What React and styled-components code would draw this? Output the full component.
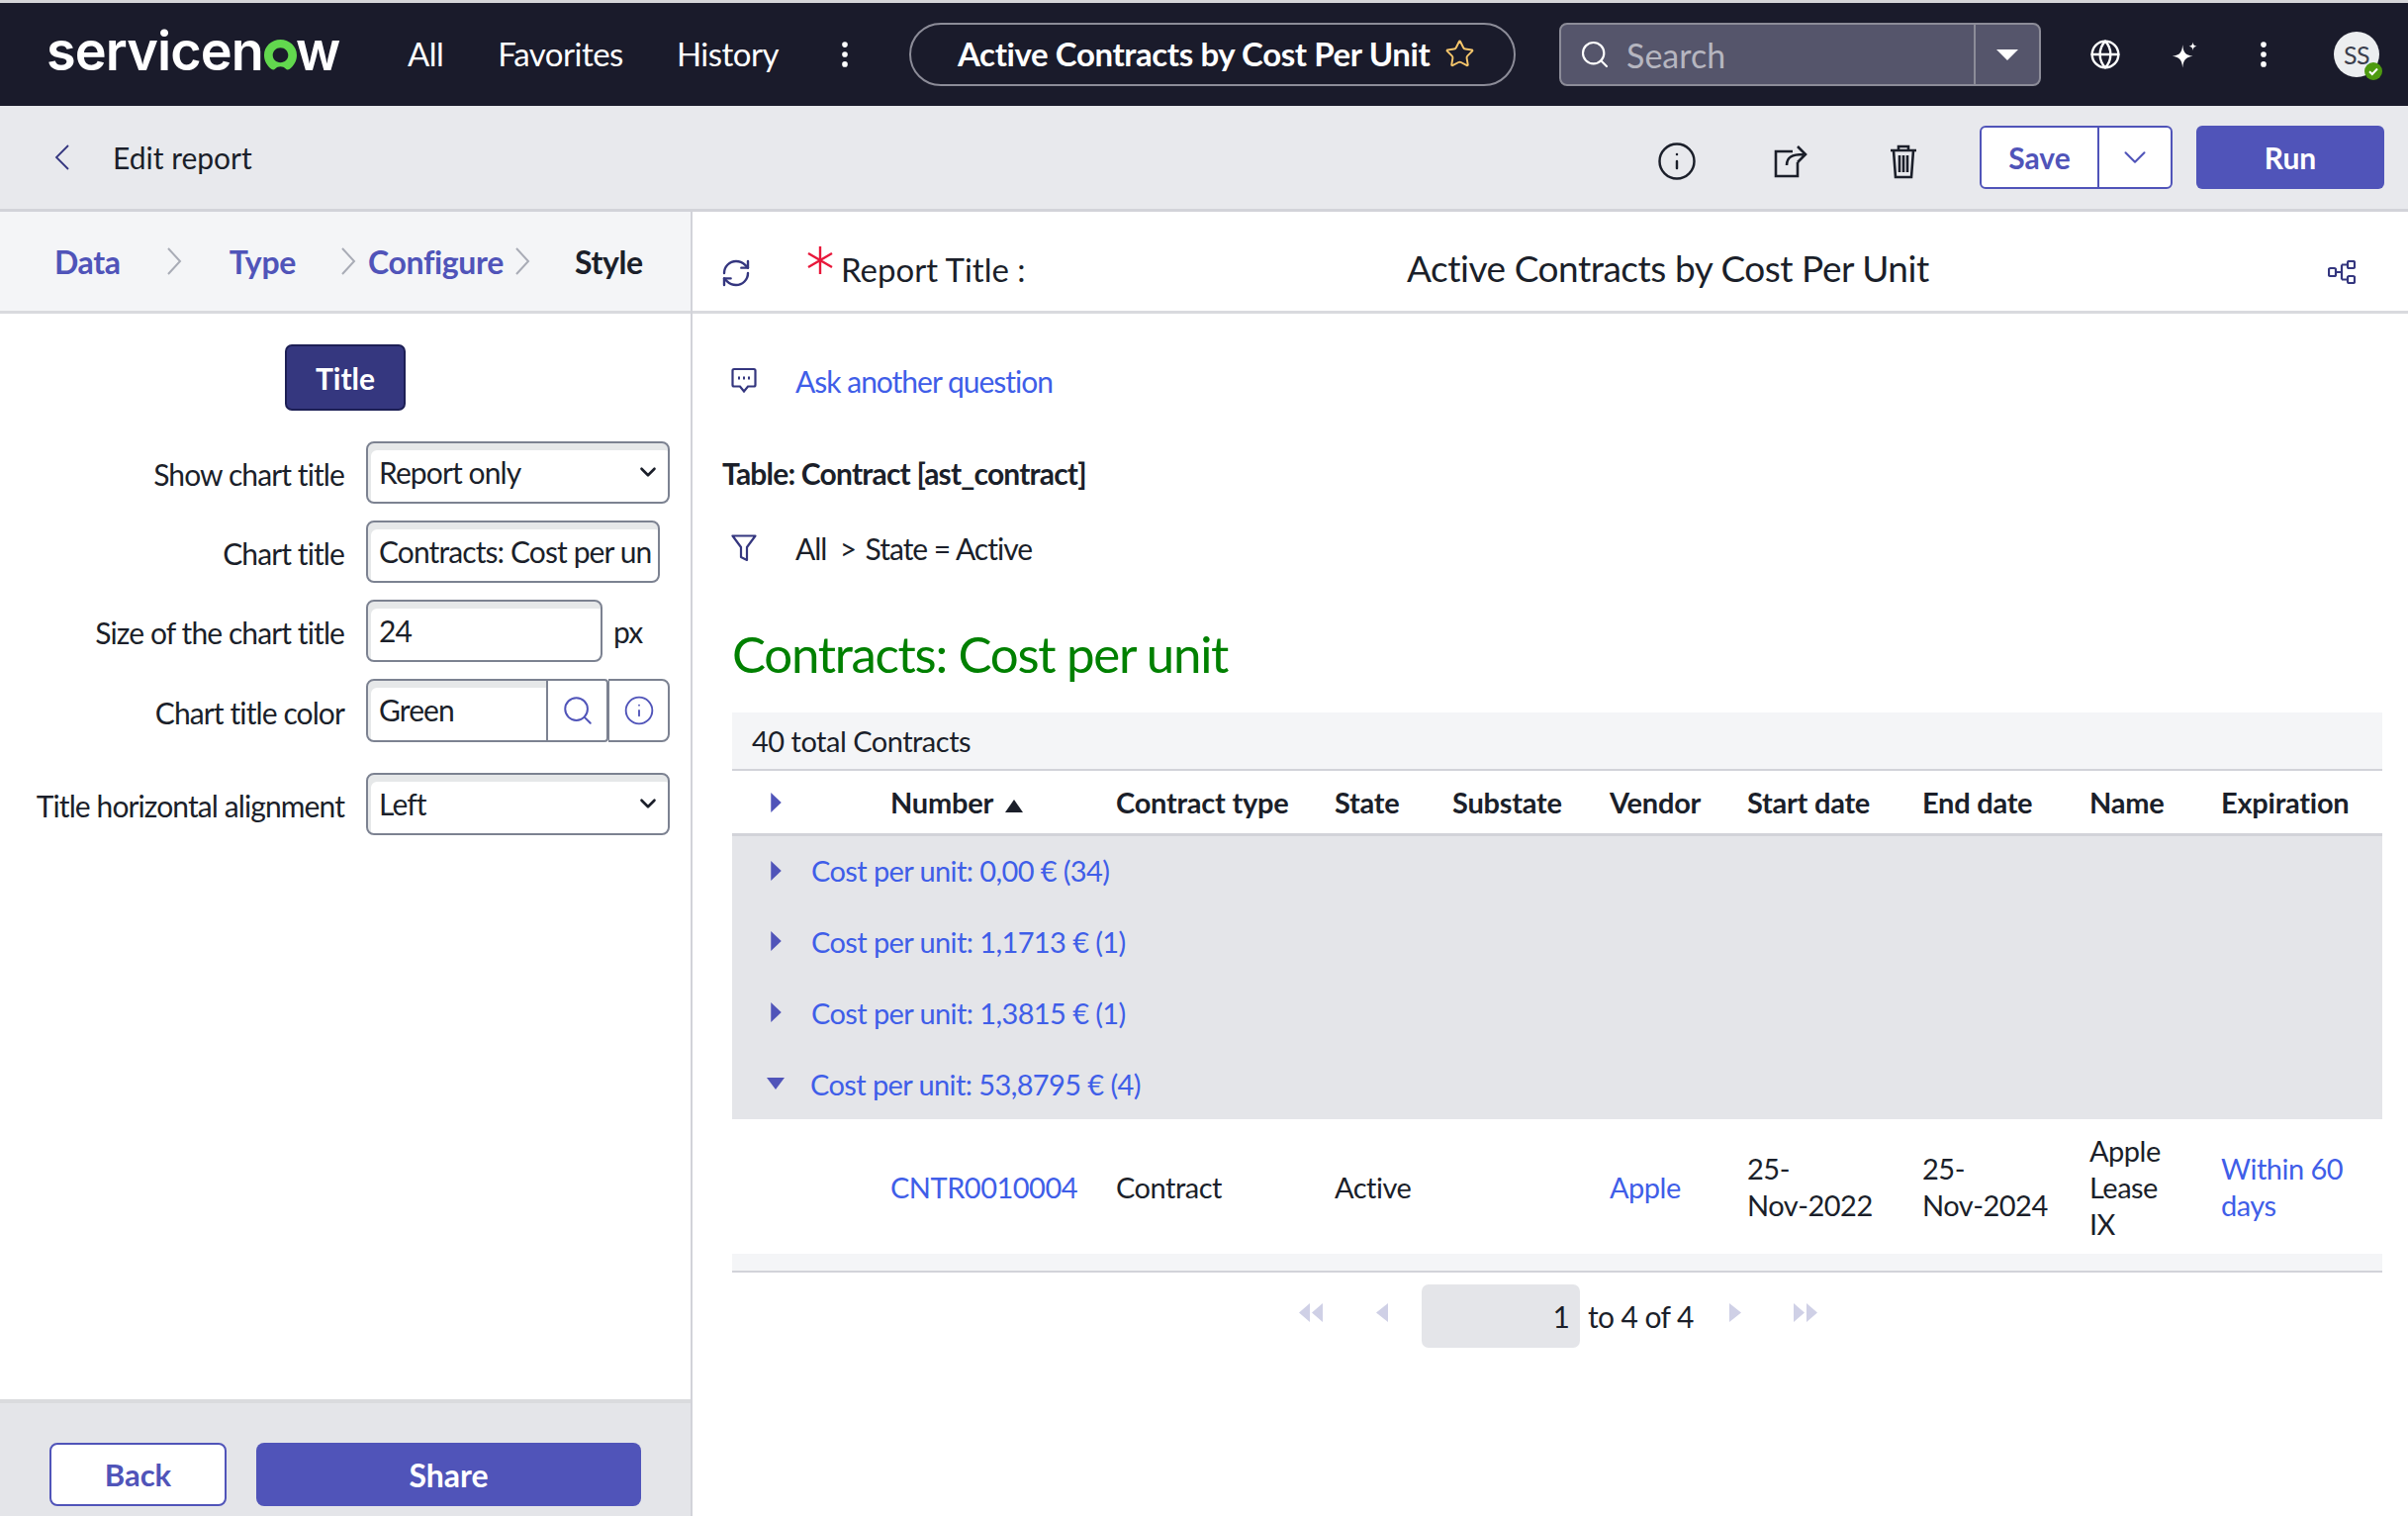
import React from "react"
import styled, { createGlobalStyle } from "styled-components"
import { Search, Star, Globe, MoreVertical, ChevronDown, Info, RefreshCw } from "lucide-react"

const GlobalStyle = createGlobalStyle`
  html, body { margin: 0; padding: 0; background: #fff; }
  body { font-family: Lato, "Open Sans", sans-serif; color: #1b1f2a; font-size: 30px; }
  * { box-sizing: border-box; }
`

const Page = styled.div`
  width: 2434px;
  height: 1532px;
  overflow: hidden;
  display: flex;
  flex-direction: column;
  border-top: 3px solid #d5d5d8;
`

/* top nav */
const Nav = styled.header`
  height: 104px;
  flex: none;
  background: #1a1b2b;
  color: #fff;
  display: flex;
  align-items: center;
  padding-left: 47px;
`
const Logo = styled.div`
  width: 296px;
  margin-right: 69px;
  font-family: Inter, sans-serif;
  font-weight: 600;
  font-size: 54px;
  line-height: 1;
  letter-spacing: -0.9px;
  display: flex;
  align-items: baseline;
  position: relative;
  top: -3px;
`
const LogoO = styled.svg`
  width: 33px;
  height: 31px;
  margin: 0 -1px 0 1px;
  flex: none;
  align-self: baseline;
`
const NavLink = styled.a`
  font-size: 33px;
  letter-spacing: -0.5px;
  margin: -2px ${(p) => p.$gap}px 0 0;
  color: #fff;
`
const NavKebab = styled(MoreVertical)`
  flex: none;
  color: #fff;
`
const TitlePill = styled.div`
  width: 613px;
  height: 64px;
  margin-left: 48px;
  border: 2.5px solid #8c8c98;
  border-radius: 32px;
  display: flex;
  align-items: center;
  padding: 0 0 2px 47px;
  font-size: 33px;
  font-weight: 700;
  letter-spacing: -0.4px;
  white-space: nowrap;
  svg { margin-left: 15px; color: #f6c66b; flex: none; }
`
const SearchBox = styled.div`
  width: 487px;
  height: 64px;
  margin-left: 44px;
  border: 2.5px solid #8c8c98;
  border-radius: 8px;
  background: #55556b;
  display: flex;
  align-items: center;
`
const SearchField = styled.div`
  flex: 1;
  height: 100%;
  display: flex;
  align-items: center;
  gap: 16px;
  padding-left: 18px;
  color: #b6b6c0;
  font-size: 34px;
  svg { color: #fff; }
`
const SearchCaret = styled.div`
  width: 66px;
  height: 100%;
  border-left: 2px solid #8c8c98;
  display: flex;
  align-items: center;
  justify-content: center;
  &::after {
    content: "";
    border-left: 11px solid transparent;
    border-right: 11px solid transparent;
    border-top: 11px solid #fff;
  }
`
const NavIcons = styled.div`
  display: flex;
  align-items: center;
  margin-left: 49px;
  gap: 48px;
  svg { flex: none; color: #fff; }
`
const Avatar = styled.div`
  width: 46px;
  height: 46px;
  margin-left: 6px;
  border-radius: 50%;
  background: #eceef0;
  color: #3b3f4d;
  font-size: 25px;
  letter-spacing: -0.5px;
  display: flex;
  align-items: center;
  justify-content: center;
  position: relative;
`
const AvatarBadge = styled.svg`
  position: absolute;
  right: -3px;
  bottom: -3px;
`

/* edit toolbar */
const Toolbar = styled.div`
  height: 107px;
  flex: none;
  background: #e8e9ed;
  border-bottom: 3px solid #d2d3d9;
  display: flex;
  align-items: center;
  padding: 0 24px 1px 55px;
`
const ThinChevron = styled.svg`
  flex: none;
  margin-right: ${(p) => p.$gap}px;
`
const ToolbarTitle = styled.div`
  font-size: 30px;
  flex: 1;
`
const ToolIcons = styled.div`
  display: flex;
  align-items: center;
  gap: 76px;
  margin: 9px 62px 0 0;
  svg { flex: none; }
  svg:last-child { margin-left: 5px; }
`
const SaveGroup = styled.div`
  width: 195px;
  height: 64px;
  border: 2.5px solid #5054b9;
  border-radius: 6px;
  background: #fff;
  display: flex;
  align-items: stretch;
  color: #5054b9;
  font-weight: 700;
`
const SaveLabel = styled.div`
  width: 119px;
  display: flex;
  align-items: center;
  justify-content: center;
  border-right: 2px solid #5054b9;
`
const SaveArrow = styled.div`
  flex: 1;
  display: flex;
  align-items: center;
  justify-content: center;
`
const PrimaryButton = styled.button`
  width: ${(p) => p.$width}px;
  height: 64px;
  border: none;
  border-radius: 6px;
  background: #5054b9;
  color: #fff;
  font: 700 30px Lato, sans-serif;
  margin-left: ${(p) => p.$left || 0}px;
`

/* body */
const Body = styled.div`
  flex: 1;
  display: flex;
  min-height: 0;
`
const LeftPanel = styled.aside`
  width: 700px;
  flex: none;
  border-right: 2px solid #d2d3d9;
  display: flex;
  flex-direction: column;
`
const Steps = styled.nav`
  height: 103px;
  flex: none;
  background: #f4f5f7;
  border-bottom: 3px solid #d9dade;
  display: flex;
  align-items: center;
  padding: 0 0 0 55px;
  font-weight: 700;
  font-size: 32px;
  letter-spacing: -0.35px;
`
const Step = styled.span`
  color: ${(p) => (p.$current ? "#1b1f2a" : "#5054b9")};
  margin-right: ${(p) => p.$gap}px;
`
const FormArea = styled.div`
  flex: 1;
  display: flex;
  flex-direction: column;
  align-items: stretch;
  padding-top: 31px;
`
const TitleTab = styled.button`
  align-self: center;
  width: 122px;
  height: 67px;
  border: 2px solid #1d1f55;
  border-radius: 7px;
  background: #35377f;
  color: #fff;
  font: 700 30px Lato, sans-serif;
`
const FormGrid = styled.div`
  margin-top: 31px;
  display: grid;
  grid-template-columns: 348px 307px;
  column-gap: 22px;
  row-gap: 17px;
  letter-spacing: -0.9px;
`
const FieldLabel = styled.label`
  justify-self: end;
  align-self: center;
  font-size: 30px;
  white-space: nowrap;
  margin-top: ${(p) => p.$top || 3}px;
`
const Control = styled.div`
  height: 63px;
  width: ${(p) => p.$width || 307}px;
  border: 2.5px solid #7c8291;
  border-radius: 8px;
  background: #fff;
  box-shadow: inset 3px 7px 0 #e6e8e9;
  display: flex;
  align-items: center;
  padding: 0 0 2px 11px;
  font-size: 30px;
  position: relative;
  overflow: hidden;
  white-space: nowrap;
  margin-top: ${(p) => p.$top || 0}px;
`
const SelectArrow = styled(ChevronDown)`
  position: absolute;
  right: 7px;
  top: 16px;
  color: #1b1f2a;
`
const FieldWithUnit = styled.div`
  display: flex;
  align-items: center;
  gap: 11px;
`
const ColorField = styled.div`
  display: flex;
  height: 64px;
  width: 307px;
`
const ColorInput = styled(Control)`
  width: 183px;
  height: 100%;
  border-radius: 8px 0 0 8px;
  border-right-width: 1px;
`
const ColorAddon = styled.div`
  width: 62px;
  height: 100%;
  border: 2.5px solid #7c8291;
  border-left-width: 1px;
  border-radius: ${(p) => (p.$last ? "0 8px 8px 0" : "0 4px 4px 0")};
  display: flex;
  align-items: center;
  justify-content: center;
  color: #5054b9;
`
const PanelFooter = styled.div`
  height: 118px;
  flex: none;
  background: #e4e5e9;
  border-top: 4px solid #dadbde;
  display: flex;
  padding: 40px 0 0 50px;
  gap: 30px;
`
const BackButton = styled.button`
  width: 179px;
  height: 64px;
  background: #fff;
  border: 2.5px solid #5054b9;
  border-radius: 8px;
  color: #5054b9;
  font: 700 31px Lato, sans-serif;
`
const ShareButton = styled(PrimaryButton)`
  border-radius: 8px;
  font-size: 32px;
`

/* right side */
const RightPanel = styled.main`
  flex: 1;
  min-width: 0;
  display: flex;
  flex-direction: column;
`
const ReportHeader = styled.div`
  height: 103px;
  flex: none;
  border-bottom: 3px solid #d9dade;
  display: flex;
  align-items: center;
  padding: 12px 0 0 28px;
`
const RefreshIcon = styled(RefreshCw)`
  color: #34367f;
  flex: none;
  margin: 12px 55px 0 0;
`
const Asterisk = styled.svg`
  flex: none;
  margin: -14px 7px 0 0;
`
const ReportLabel = styled.div`
  width: 572px;
  font-size: 33px;
  margin-top: 4px;
`
const ReportName = styled.div`
  flex: 1;
  font-size: 37px;
  letter-spacing: -0.47px;
`
const GraphIcon = styled.svg`
  flex: none;
  margin: 10px 53px 0 0;
`
const Content = styled.div`
  flex: 1;
  padding: 38px 26px 0 30px;
  display: flex;
  flex-direction: column;
`
const InfoRow = styled.div`
  height: 60px;
  display: flex;
  align-items: center;
  padding-left: 9px;
  margin-bottom: ${(p) => p.$after}px;
  font-size: 30px;
  letter-spacing: -1px;
  svg { flex: none; margin-right: 39px; }
`
const LinkText = styled.a`
  color: #3f5ee8;
`
const TableName = styled.div`
  height: 60px;
  display: flex;
  align-items: center;
  margin-bottom: 16px;
  font-weight: 700;
  font-size: 30px;
  letter-spacing: -0.8px;
`
const Heading = styled.h1`
  margin: 0 0 29px 10px;
  height: 60px;
  line-height: 60px;
  font-size: 51px;
  letter-spacing: -1.3px;
  font-weight: 400;
  color: #008000;
`
const TableWrap = styled.div`
  margin-left: 10px;
  letter-spacing: -0.5px;
`
const TotalRow = styled.div`
  height: 59px;
  background: #f4f5f7;
  border-bottom: 2.5px solid #d2d3d9;
  display: flex;
  align-items: center;
  padding-left: 20px;
  font-size: 29px;
`
const Grid = styled.table`
  width: 100%;
  table-layout: fixed;
  border-collapse: collapse;
`
const HeadCell = styled.th`
  height: 64px;
  padding: 0 0 0 15px;
  text-align: left;
  font-size: 29px;
  font-weight: 700;
  letter-spacing: -0.25px;
  white-space: nowrap;
  border-bottom: 3px solid #d2d3d9;
  svg { vertical-align: 1px; }
`
const ExpandCell = styled(HeadCell)`
  padding-left: 38px;
`
const GroupCell = styled.td`
  height: 72px;
  padding: 0 0 0 38px;
  background: #e4e5e9;
  font-size: 29px;
  letter-spacing: -0.6px;
`
const GroupInner = styled.div`
  display: flex;
  align-items: center;
  gap: 29px;
`
const Caret = styled.svg`
  flex: none;
`
const DownCaret = styled(Caret)`
  margin: 0 -3px 0 -3px;
`
const SortArrow = styled.svg`
  margin-left: 6px;
`
const BodyCell = styled.td`
  height: 136px;
  padding: 0 0 0 15px;
  font-size: 29px;
  line-height: 37px;
  vertical-align: middle;
`
const TableFoot = styled.div`
  height: 19px;
  background: #f4f5f7;
  border-bottom: 2.5px solid #d2d3d9;
`
const Pager = styled.div`
  display: flex;
  align-items: center;
  margin-top: 12px;
  padding-left: 583px;
  height: 64px;
  font-size: 29px;
`
const PagerIcon = styled.svg`
  flex: none;
  margin-right: ${(p) => p.$gap}px;
  margin-top: -8px;
`
const PageInput = styled.div`
  width: 160px;
  height: 64px;
  background: #e4e5e9;
  border-radius: 7px;
  display: flex;
  align-items: center;
  justify-content: flex-end;
  padding: 0 10px 0 0;
  font-size: 30px;
`
const PageText = styled.div`
  margin: 0 36px 0 8px;
  white-space: nowrap;
  font-size: 30px;
  letter-spacing: -0.6px;
`

const RightCaret = () => (
  <Caret width="13" height="20" viewBox="0 0 12 19">
    <path d="M1 0 L11 9.5 L1 19 Z" fill="#5054b9" />
  </Caret>
)

// tall thin chevrons used by the toolbar and the step bar
const BackChevron = () => (
  <ThinChevron $gap={44} width="15" height="26" viewBox="0 0 15 26" fill="none" stroke="#34367f" strokeWidth="1.800">
    <path d="M14 1L2 13l12 12" />
  </ThinChevron>
)
const StepChevron = ({ gap }) => (
  <ThinChevron $gap={gap} width="15" height="28" viewBox="0 0 15 28" fill="none" stroke="#a9acb6" strokeWidth="2">
    <path d="M1 1l12 13L1 27" />
  </ThinChevron>
)

const groups = ["Cost per unit: 0,00 € (34)", "Cost per unit: 1,1713 € (1)", "Cost per unit: 1,3815 € (1)"]
const columns = [
  ["Contract type", 221], ["State", 119], ["Substate", 159], ["Vendor", 139],
  ["Start date", 177], ["End date", 169], ["Name", 133], ["Expiration", 178],
]

export default function App() {
  return (
    <>
      <GlobalStyle />
      <Page>
        <Nav>
          <Logo>
            servicen
            <LogoO viewBox="0 0 33 31">
              <path fillRule="evenodd" fill="#62d84e" d="M16.5 0C7.4 0 0 7 0 15.8c0 5.8 3 11 7.6 14.2 1.2.8 2.6.6 3.6-.4 1.5-1.6 3.3-2.4 5.3-2.4s3.8.8 5.3 2.4c1 1 2.4 1.2 3.6.4C30 26.800 33 21.600 33 15.800 33 7 25.600 0 16.500 0zm0 8.200c4.400 0 7.800 3.400 7.800 7.600s-3.400 7.400-7.800 7.400-7.800-3.200-7.800-7.400 3.400-7.600 7.800-7.600z" />
            </LogoO>
            w
          </Logo>
          <NavLink $gap={55}>All</NavLink>
          <NavLink $gap={54}>Favorites</NavLink>
          <NavLink $gap={50}>History</NavLink>
          <NavKebab size={34} />
          <TitlePill>
            Active Contracts by Cost Per Unit
            <Star size={31} strokeWidth={1.5} />
          </TitlePill>
          <SearchBox>
            <SearchField>
              <Search size={32} strokeWidth={1.6} />
              Search
            </SearchField>
            <SearchCaret />
          </SearchBox>
          <NavIcons>
            <Globe size={32} strokeWidth={1.8} />
            <svg width="31" height="31" viewBox="0 0 24 24" fill="#fff">
              <path d="M11 4 C11.600 10 13 12 19 13 C13 14 11.600 16 11 22 C10.400 16 9 14 3 13 C9 12 10.400 10 11 4Z" />
              <path d="M19 2 C19.200 4 20 5 22 5.300 C20 5.600 19.200 6.500 19 8.500 C18.800 6.500 18 5.600 16 5.300 C18 5 18.800 4 19 2Z" />
            </svg>
            <MoreVertical size={34} />
            <Avatar>
              SS
              <AvatarBadge width="18" height="18" viewBox="0 0 18 18">
                <circle cx="9" cy="9" r="9" fill="#4d9a10" />
                <path d="M5 9.200l2.800 2.800L13 6.500" fill="none" stroke="#fff" strokeWidth="2" />
              </AvatarBadge>
            </Avatar>
          </NavIcons>
        </Nav>

        <Toolbar>
          <BackChevron />
          <ToolbarTitle>Edit report</ToolbarTitle>
          <ToolIcons>
            <Info size={42} strokeWidth={1.4} />
            <svg width="36" height="36" viewBox="0 0 36 36" fill="none" stroke="#1b1f2a" strokeWidth="2.6">
              <path d="M20 8H3v25h22V19" />
              <path d="M14 22c0-8 5-11 17-11M25 3l8 8-8 8" />
            </svg>
            <svg width="30" height="36" viewBox="0 0 30 36" fill="none" stroke="#1b1f2a" strokeWidth="2.6">
              <path d="M2 7h26M10 7V3h10v4M5 7l2 27h16l2-27M11 12v17M15 12v17M19 12v17" />
            </svg>
          </ToolIcons>
          <SaveGroup>
            <SaveLabel>Save</SaveLabel>
            <SaveArrow>
              <ChevronDown size={38} strokeWidth={1.3} />
            </SaveArrow>
          </SaveGroup>
          <PrimaryButton $width={190} $left={24}>Run</PrimaryButton>
        </Toolbar>

        <Body>
          <LeftPanel>
            <Steps>
              <Step $gap={47}>Data</Step>
              <StepChevron gap={48} />
              <Step $gap={46}>Type</Step>
              <StepChevron gap={12} />
              <Step $gap={12}>Configure</Step>
              <StepChevron gap={45} />
              <Step $current>Style</Step>
            </Steps>
            <FormArea>
              <TitleTab>Title</TitleTab>
              <FormGrid>
                <FieldLabel>Show chart title</FieldLabel>
                <Control>
                  Report only
                  <SelectArrow size={26} strokeWidth={2.4} />
                </Control>
                <FieldLabel>Chart title</FieldLabel>
                <Control $width={297}>Contracts: Cost per un</Control>
                <FieldLabel>Size of the chart title</FieldLabel>
                <FieldWithUnit>
                  <Control $width={239}>24</Control>
                  px
                </FieldWithUnit>
                <FieldLabel>Chart title color</FieldLabel>
                <ColorField>
                  <ColorInput>Green</ColorInput>
                  <ColorAddon>
                    <Search size={34} strokeWidth={1.4} />
                  </ColorAddon>
                  <ColorAddon $last>
                    <Info size={32} strokeWidth={1.4} />
                  </ColorAddon>
                </ColorField>
                <FieldLabel $top={17}>Title horizontal alignment</FieldLabel>
                <Control $top={14}>
                  Left
                  <SelectArrow size={26} strokeWidth={2.4} />
                </Control>
              </FormGrid>
            </FormArea>
            <PanelFooter>
              <BackButton>Back</BackButton>
              <ShareButton $width={389}>Share</ShareButton>
            </PanelFooter>
          </LeftPanel>

          <RightPanel>
            <ReportHeader>
              <RefreshIcon size={32} strokeWidth={1.8} />
              <Asterisk width="28" height="30" viewBox="0 0 28 30" fill="none" stroke="#e8173a" strokeWidth="2.4">
                <path d="M14 1v28M2 8l24 14M26 8L2 22" />
              </Asterisk>
              <ReportLabel>Report Title :</ReportLabel>
              <ReportName>Active Contracts by Cost Per Unit</ReportName>
              <GraphIcon width="28" height="24" viewBox="0 0 28 24" fill="none" stroke="#34367f" strokeWidth="2.2">
                <rect x="1" y="8" width="7" height="8" rx="1.500" />
                <rect x="20" y="1" width="7" height="7" rx="1.500" />
                <rect x="20" y="16" width="7" height="7" rx="1.500" />
                <path d="M8 12h6M14 4.500h6M14 19.500h6M14 4.500v15" />
              </GraphIcon>
            </ReportHeader>
            <Content>
              <InfoRow $after={33}>
                <svg width="26" height="28" viewBox="0 0 26 28" fill="none" stroke="#34367f" strokeWidth="2.2">
                  <path d="M3 2h20a1.500 1.500 0 0 1 1.500 1.500V18a1.500 1.500 0 0 1-1.500 1.500h-6l-4 5-4-5H3A1.500 1.500 0 0 1 1.500 18V3.500A1.500 1.500 0 0 1 3 2z" />
                  <path d="M7 11h2M12 11h2M17 11h2" strokeWidth="3" />
                </svg>
                <LinkText>Ask another question</LinkText>
              </InfoRow>
              <TableName>Table: Contract [ast_contract]</TableName>
              <InfoRow $after={47}>
                <svg width="26" height="28" viewBox="0 0 26 28" fill="none" stroke="#34367f" strokeWidth="2.2" strokeLinejoin="round">
                  <path d="M1.500 1.500h23L16 13v13l-6-3V13z" />
                </svg>
                All&nbsp;&nbsp;&gt;&nbsp;&thinsp;State = Active
              </InfoRow>
              <Heading>Contracts: Cost per unit</Heading>
              <TableWrap>
                <TotalRow>40 total Contracts</TotalRow>
                <Grid>
                  <colgroup>
                    <col style={{ width: 145 }} />
                    <col style={{ width: 228 }} />
                    {columns.map(([name, w]) => <col key={name} style={{ width: w }} />)}
                  </colgroup>
                  <thead>
                    <tr>
                      <ExpandCell><RightCaret /></ExpandCell>
                      <HeadCell>
                        Number{" "}
                        <SortArrow width="18" height="13" viewBox="0 0 18 13">
                          <path d="M9 0l9 13H0z" fill="#1b1f2a" />
                        </SortArrow>
                      </HeadCell>
                      {columns.map(([name]) => <HeadCell key={name}>{name}</HeadCell>)}
                    </tr>
                  </thead>
                  <tbody>
                    {groups.map((g) => (
                      <tr key={g}>
                        <GroupCell colSpan={10}>
                          <GroupInner><RightCaret /><LinkText>{g}</LinkText></GroupInner>
                        </GroupCell>
                      </tr>
                    ))}
                    <tr>
                      <GroupCell colSpan={10}>
                        <GroupInner>
                          <DownCaret width="18" height="12" viewBox="0 0 18 12">
                            <path d="M0 0h18L9 12z" fill="#5054b9" />
                          </DownCaret>
                          <LinkText>Cost per unit: 53,8795 € (4)</LinkText>
                        </GroupInner>
                      </GroupCell>
                    </tr>
                    <tr>
                      <BodyCell />
                      <BodyCell><LinkText>CNTR0010004</LinkText></BodyCell>
                      <BodyCell>Contract</BodyCell>
                      <BodyCell>Active</BodyCell>
                      <BodyCell />
                      <BodyCell><LinkText>Apple</LinkText></BodyCell>
                      <BodyCell>25-<br />Nov-2022</BodyCell>
                      <BodyCell>25-<br />Nov-2024</BodyCell>
                      <BodyCell>Apple<br />Lease<br />IX</BodyCell>
                      <BodyCell><LinkText>Within 60<br />days</LinkText></BodyCell>
                    </tr>
                  </tbody>
                </Grid>
                <TableFoot />
              </TableWrap>
              <Pager>
                <PagerIcon $gap={54} width="24" height="19" viewBox="0 0 24 19" fill="#cfd0e6">
                  <path d="M11 0v19L0 9.500zM24 0v19L13 9.500z" />
                </PagerIcon>
                <PagerIcon $gap={34} width="12" height="19" viewBox="0 0 12 19" fill="#cfd0e6">
                  <path d="M12 0v19L0 9.500z" />
                </PagerIcon>
                <PageInput>1</PageInput>
                <PageText>to 4 of 4</PageText>
                <PagerIcon $gap={53} width="12" height="19" viewBox="0 0 12 19" fill="#cfd0e6">
                  <path d="M0 0v19l12-9.500z" />
                </PagerIcon>
                <PagerIcon $gap={0} width="24" height="19" viewBox="0 0 24 19" fill="#cfd0e6">
                  <path d="M0 0v19l11-9.500zM13 0v19l11-9.500z" />
                </PagerIcon>
              </Pager>
            </Content>
          </RightPanel>
        </Body>
      </Page>
    </>
  )
}
